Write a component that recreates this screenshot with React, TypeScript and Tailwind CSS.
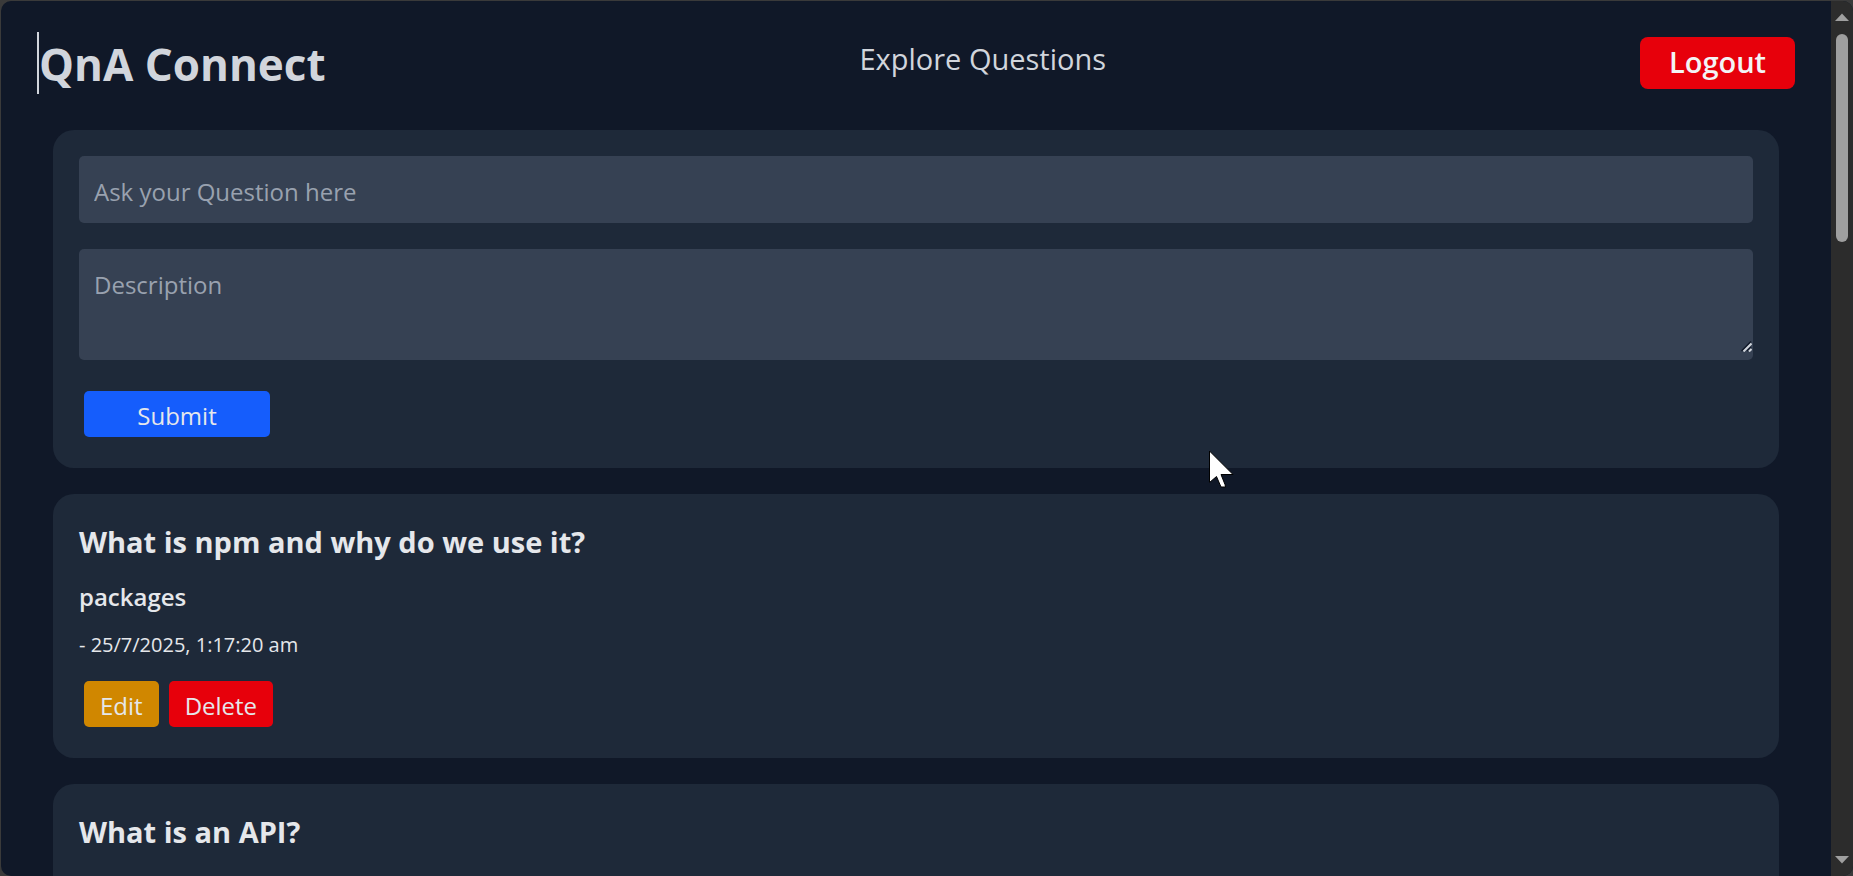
import type { ReactNode } from "react";

type Question = {
  id: number;
  title: string;
  details?: { description: string; createdAt: string };
};

const questions: Question[] = [
  {
    id: 1,
    title: "What is npm and why do we use it?",
    details: { description: "packages", createdAt: "25/7/2025, 1:17:20 am" },
  },
  { id: 2, title: "What is an API?" },
];

function Header() {
  return (
    <header className="flex h-[125px] shrink-0 items-center justify-between px-9 pb-0.5 text-gray-300">
      <h1 className="border-l-2 border-gray-300 pt-0.5 text-[44px] leading-[60px] font-bold">
        QnA Connect
      </h1>
      <nav className="pb-2">
        <a href="#questions" className="text-[29px] leading-10">
          Explore Questions
        </a>
      </nav>
      <button
        type="button"
        className="h-[52px] w-[155px] rounded-lg bg-red-600 pb-0.5 text-[29px] leading-12 font-semibold text-gray-100"
      >
        Logout
      </button>
    </header>
  );
}

function Card({ children }: { children: ReactNode }) {
  return (
    <div className="min-h-[264px] rounded-[21px] bg-gray-800 p-[26px]">
      {children}
    </div>
  );
}

function ResizeGrip() {
  return (
    <svg
      aria-hidden="true"
      className="pointer-events-none absolute right-px bottom-2"
      width="11"
      height="11"
      viewBox="0 0 11 11"
      fill="none"
    >
      <path d="M0.5 10 10 0.5M6 10 10 6" stroke="#101828" strokeWidth="1.5" />
      <path d="M2.5 10.5 10.5 2.5M8 10.5 10.5 8" stroke="#d1d5dc" strokeWidth="2" />
    </svg>
  );
}

function AskForm() {
  return (
    <Card>
      <form className="flex flex-col gap-[26px] text-[24px]">
        <input
          type="text"
          aria-label="Question"
          placeholder="Ask your Question here"
          className="h-[67px] rounded-[5px] bg-gray-700 px-[15px] pt-1 placeholder:text-gray-400"
        />
        <div className="relative flex">
          <textarea
            aria-label="Description"
            placeholder="Description"
            rows={2}
            className="w-full resize-none rounded-[5px] bg-gray-700 px-[15px] pt-4 pb-[17px] leading-[39px] placeholder:text-gray-400"
          />
          <ResizeGrip />
        </div>
        <div className="flex p-[5px]">
          <button
            type="submit"
            className="h-[46px] w-[186px] rounded-[5px] bg-blue-600 pt-1"
          >
            Submit
          </button>
        </div>
      </form>
    </Card>
  );
}

function QuestionCard({ question }: { question: Question }) {
  const { title, details } = question;
  return (
    <Card>
      <article className="flex flex-col gap-4">
        <h2 className="text-[29px] leading-11 font-bold">{title}</h2>
        {details && (
          <>
            <p className="text-[24px] leading-[34px] font-semibold">
              {details.description}
            </p>
            <p className="text-[20px] leading-[30px]">- {details.createdAt}</p>
            <div className="flex gap-2.5 p-[5px] text-[24px]">
              <button
                type="button"
                className="h-[46px] rounded-[5px] bg-yellow-600 px-4 pt-1"
              >
                Edit
              </button>
              <button
                type="button"
                className="h-[46px] rounded-[5px] bg-red-600 px-4 pt-1"
              >
                Delete
              </button>
            </div>
          </>
        )}
      </article>
    </Card>
  );
}

function ScrollRail() {
  return (
    <div
      aria-hidden="true"
      className="flex w-[22px] shrink-0 flex-col items-center justify-between bg-[#2c2c2c] py-3"
    >
      <div className="flex flex-col items-center gap-[13px]">
        <svg width="14" height="8" viewBox="0 0 14 8" fill="#9f9f9f">
          <path d="M7 0.5 14 8H0Z" />
        </svg>
        <div className="h-[208px] w-3 rounded-full bg-[#9f9f9f]" />
      </div>
      <svg width="14" height="8" viewBox="0 0 14 8" fill="#9f9f9f">
        <path d="M0 0H14L7 7.5Z" />
      </svg>
    </div>
  );
}

function Pointer() {
  return (
    <svg
      aria-hidden="true"
      className="pointer-events-none absolute top-[448px] left-[1208px]"
      width="28"
      height="42"
      viewBox="0 0 28 42"
    >
      <path
        d="M1.5 3V34.5L8.5 28.5L13 39H17.5L17 36.5L13 26.5H25Z"
        fill="#ffffff"
        stroke="#000000"
        strokeWidth="1"
      />
    </svg>
  );
}

export default function App() {
  return (
    <div className="relative h-screen overflow-hidden bg-[#3a3a3a] pt-px pl-px font-['Open_Sans',sans-serif] text-gray-200">
      <div className="flex h-full overflow-hidden rounded-[10px] bg-gray-900">
        <div className="flex min-w-0 flex-1 flex-col overflow-hidden">
          <Header />
          <main
            id="questions"
            className="flex flex-col gap-[26px] px-[52px] pt-1"
          >
            <AskForm />
            {questions.map((question) => (
              <QuestionCard key={question.id} question={question} />
            ))}
          </main>
        </div>
        <ScrollRail />
      </div>
      <Pointer />
    </div>
  );
}
